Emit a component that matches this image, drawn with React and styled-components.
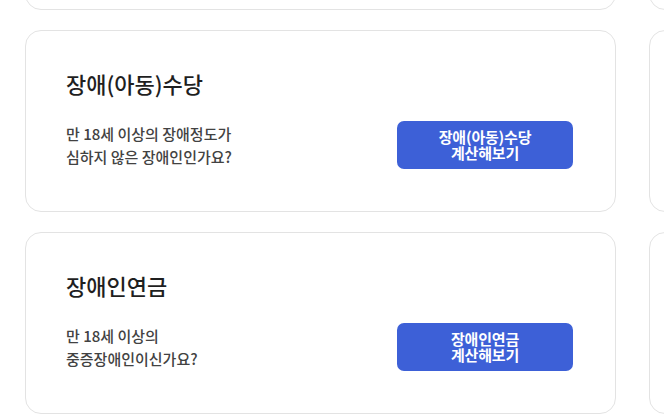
import React from "react";
import styled, { createGlobalStyle } from "styled-components";

const GlobalStyle = createGlobalStyle`
  html, body {
    margin: 0;
    padding: 0;
    background: #ffffff;
    overflow: hidden;
  }
  body {
    font-family: "Noto Sans CJK KR", "Noto Sans", sans-serif;
  }
`;

const Page = styled.div`
  width: 664px;
  height: 418px;
  overflow: hidden;
  padding-left: 25px;
  box-sizing: border-box;
`;

const Grid = styled.div`
  margin-top: -172px;
  display: grid;
  grid-template-columns: 591px 591px;
  column-gap: 33px;
  row-gap: 20px;
`;

const Card = styled.section`
  box-sizing: border-box;
  height: 182px;
  border: 1px solid #e3e3e3;
  border-radius: 16px;
  background: #fff;
  padding: 37px 42px 0 40px;
  display: flex;
  flex-direction: column;
`;

const Title = styled.h3`
  margin: 0;
  font-size: 22px;
  line-height: 30px;
  font-weight: 500;
  color: #1f1f1f;
  letter-spacing: 0;
`;

const Row = styled.div`
  margin-top: 23px;
  display: flex;
  align-items: center;
  justify-content: space-between;
`;

const Desc = styled.p`
  margin: 0;
  font-size: 15px;
  line-height: 23px;
  font-weight: 500;
  color: #424242;
  letter-spacing: 0;
`;

const CalcButton = styled.button`
  width: 176px;
  height: 48px;
  border: 0;
  border-radius: 7px;
  background: #3d60d7;
  color: #fff;
  font-family: inherit;
  font-size: 15px;
  line-height: 16px;
  font-weight: 700;
  letter-spacing: -0.2px;
  cursor: pointer;
`;

const items = [
  { title: "장애수당", desc: ["만 18세 이상의", "장애인이신가요?"], btn: "장애수당" },
  { title: "", desc: [], btn: null },
  { title: "장애(아동)수당", desc: ["만 18세 이상의 장애정도가", "심하지 않은 장애인인가요?"], btn: "장애(아동)수당" },
  { title: "", desc: [], btn: null },
  { title: "장애인연금", desc: ["만 18세 이상의", "중증장애인이신가요?"], btn: "장애인연금" },
  { title: "", desc: [], btn: null },
];

function BenefitCard({ title, desc, btn }) {
  return (
    <Card>
      {title && <Title>{title}</Title>}
      {btn && (
        <Row>
          <Desc>
            {desc[0]}
            <br />
            {desc[1]}
          </Desc>
          <CalcButton>
            {btn}
            <br />
            계산해보기
          </CalcButton>
        </Row>
      )}
    </Card>
  );
}

export default function App() {
  return (
    <Page>
      <GlobalStyle />
      <Grid>
        {items.map((it, i) => (
          <BenefitCard key={i} {...it} />
        ))}
      </Grid>
    </Page>
  );
}
